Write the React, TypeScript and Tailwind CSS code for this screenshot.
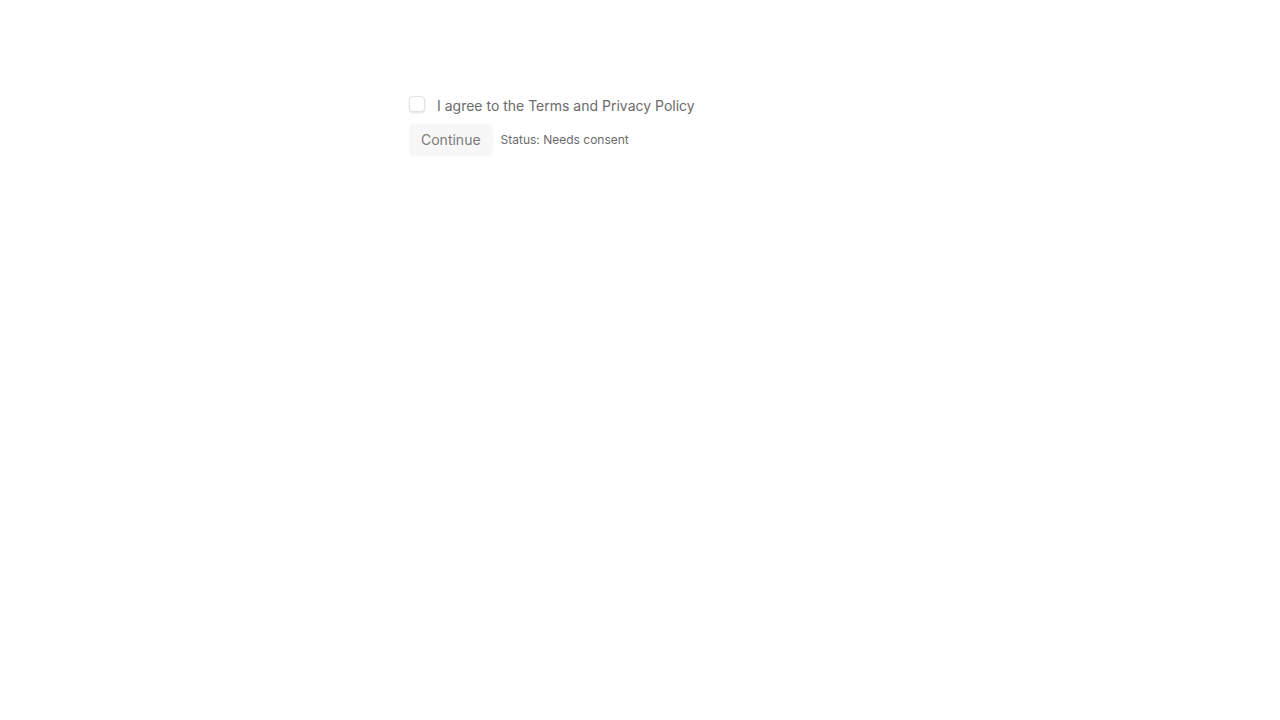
import { useState } from 'react'

export default function App() {
  const [agreed, setAgreed] = useState(false)

  return (
    <div className="min-h-screen bg-white" style={{ fontFamily: 'Inter, "Liberation Sans", sans-serif' }}>
      <div className="mx-auto w-[462px] pt-[94px]">
        <label className="flex items-center gap-3 h-5">
          <input
            type="checkbox"
            checked={agreed}
            onChange={e => setAgreed(e.target.checked)}
            className="appearance-none w-4 h-4 rounded-[4px] border border-[#e2e2e2] bg-white shadow-[0_1px_2px_rgba(0,0,0,0.12)]"
          />
          <span className="text-sm text-[#6b6b6b] translate-y-[2px]">I agree to the Terms and Privacy Policy</span>
        </label>
        <div className="flex items-center gap-2 mt-[10px]">
          <button
            disabled={!agreed}
            className="h-8 px-3 rounded-md bg-[#f7f7f7] text-sm text-[#7a7a7a]"
          >
            Continue
          </button>
          <span className="text-xs text-[#6b6b6b]">Status: {agreed ? 'Agreed' : 'Needs consent'}</span>
        </div>
      </div>
    </div>
  )
}
